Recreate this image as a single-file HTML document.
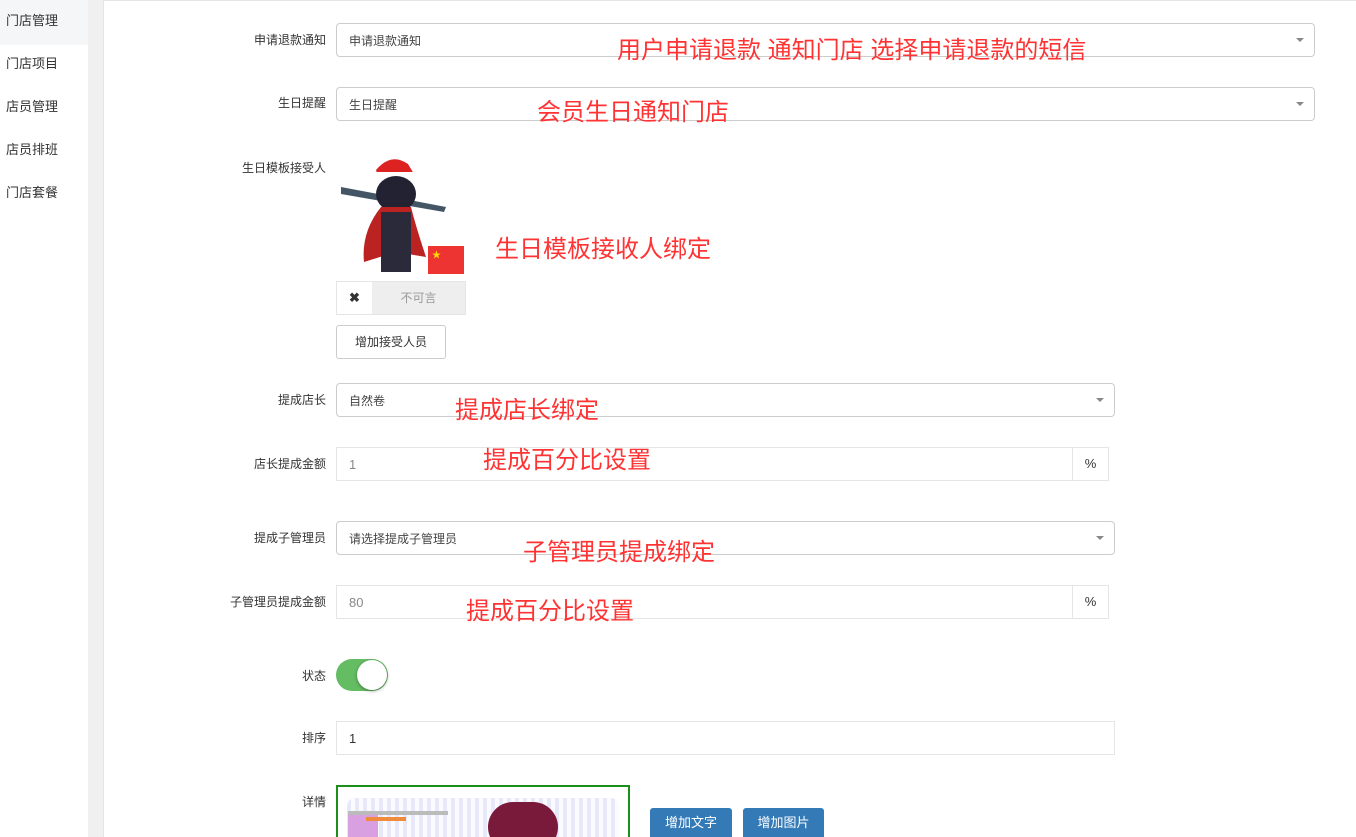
<!DOCTYPE html>
<html><head><meta charset="utf-8"><style>
html,body{margin:0;width:1356px;height:837px;overflow:hidden}
body{background:#fff;font-family:"Liberation Sans","Noto Sans CJK SC",sans-serif;font-size:12px;color:#333;position:relative}
.a{position:absolute}
.side{left:0;top:0;width:88px;height:837px;background:#fff}
.side div{position:absolute;left:6px;font-size:13px;color:#333}
.strip{left:88px;top:0;width:15px;height:837px;background:#f0f0f0}
.panel{left:103px;top:0;width:1253px;height:837px;border-left:1px solid #e5e5e5;border-top:1px solid #e5e5e5;background:#fff;box-sizing:border-box}
.lbl{text-align:right;width:140px;left:186px;font-size:12px;color:#333}
.sel{border:1px solid #ccc;border-radius:4px;height:34px;box-sizing:border-box;padding:8px 12px;font-size:12px;color:#444;background:#fff}
.sel:after{content:"";position:absolute;right:10px;top:14px;border:4px solid transparent;border-top:4px solid #888}
.inp{border:1px solid #e5e5e5;height:34px;box-sizing:border-box;padding:9px 12px;font-size:13px;color:#555}
.pct{border:1px solid #e5e5e5;border-left:none;width:36px;height:34px;box-sizing:border-box;text-align:center;line-height:32px;font-size:13px}
.red{color:#f33;font-size:24px;line-height:28px}
.btn{background:#337ab7;color:#fff;border-radius:3px;font-size:13px;text-align:center;line-height:30px;height:32px}
</style></head><body>
<div class="a side">
<div style="left:0;top:0;width:88px;height:45px;background:#f5f6f8"></div>
<div style="top:10px">门店管理</div><div style="top:53px">门店项目</div><div style="top:96px">店员管理</div><div style="top:139px">店员排班</div><div style="top:182px">门店套餐</div>
</div>
<div class="a strip"></div>
<div class="a panel"></div>

<div class="a lbl" style="top:31px">申请退款通知</div>
<div class="a sel" style="left:336px;top:23px;width:979px">申请退款通知</div>
<div class="a red" style="left:617px;top:37px">用户申请退款 通知门店 选择申请退款的短信</div>

<div class="a lbl" style="top:94px">生日提醒</div>
<div class="a sel" style="left:336px;top:87px;width:979px">生日提醒</div>
<div class="a red" style="left:537px;top:99px">会员生日通知门店</div>

<div class="a lbl" style="top:159px">生日模板接受人</div>
<svg class="a" style="left:336px;top:152px" width="130" height="130">
<path d="M40 18 Q55 0 72 12 L78 22 L42 24Z" fill="#d22"/><rect x="40" y="20" width="40" height="6" fill="#fff"/>
<path d="M5 35 L110 55 L108 60 L5 42Z" fill="#456"/>
<ellipse cx="60" cy="42" rx="20" ry="18" fill="#223"/>
<path d="M45 55 Q25 80 28 110 L60 100 L90 105 Q80 75 75 55Z" fill="#b22"/>
<rect x="45" y="60" width="30" height="60" fill="#2a2a3a"/>
<rect x="92" y="94" width="36" height="28" fill="#e33"/><text x="96" y="106" font-size="9" fill="#fd0">★</text>
</svg>
<div class="a" style="left:336px;top:281px;width:130px;height:34px;border:1px solid #e5e5e5;box-sizing:border-box;background:#fff">
<div class="a" style="left:0;top:0;width:35px;height:32px;text-align:center;line-height:32px;font-weight:bold;font-size:13px">✖</div>
<div class="a" style="left:35px;top:0;width:93px;height:32px;background:#eee;color:#999;text-align:center;line-height:32px;font-size:12px">不可言</div>
</div>
<div class="a" style="left:336px;top:325px;width:110px;height:34px;border:1px solid #ccc;border-radius:3px;box-sizing:border-box;text-align:center;line-height:32px;font-size:12px">增加接受人员</div>
<div class="a red" style="left:495px;top:236px">生日模板接收人绑定</div>

<div class="a lbl" style="top:391px">提成店长</div>
<div class="a sel" style="left:336px;top:383px;width:779px">自然卷</div>
<div class="a red" style="left:455px;top:397px">提成店长绑定</div>

<div class="a lbl" style="top:455px">店长提成金额</div>
<div class="a inp" style="left:336px;top:447px;width:737px;color:#888">1</div>
<div class="a pct" style="left:1073px;top:447px">%</div>
<div class="a red" style="left:483px;top:447px">提成百分比设置</div>

<div class="a lbl" style="top:529px">提成子管理员</div>
<div class="a sel" style="left:336px;top:521px;width:779px">请选择提成子管理员</div>
<div class="a red" style="left:523px;top:539px">子管理员提成绑定</div>

<div class="a lbl" style="top:593px">子管理员提成金额</div>
<div class="a inp" style="left:336px;top:585px;width:737px;color:#888">80</div>
<div class="a pct" style="left:1073px;top:585px">%</div>
<div class="a red" style="left:466px;top:598px">提成百分比设置</div>

<div class="a lbl" style="top:667px">状态</div>
<div class="a" style="left:336px;top:659px;width:52px;height:32px;border-radius:16px;background:#64bd63"></div>
<div class="a" style="left:357px;top:660px;width:30px;height:30px;border-radius:15px;background:#fff;box-shadow:0 1px 3px rgba(0,0,0,.4)"></div>

<div class="a lbl" style="top:729px">排序</div>
<div class="a inp" style="left:336px;top:721px;width:779px;color:#333">1</div>

<div class="a lbl" style="top:793px">详情</div>
<div class="a" style="left:336px;top:785px;width:294px;height:60px;border:2px solid #1a8f1a;box-sizing:border-box;background:#fff;overflow:hidden">
<div class="a" style="left:9px;top:11px;width:272px;height:50px;border-radius:8px;background:repeating-linear-gradient(90deg,#e8e8fb 0 4px,#fafaff 4px 8px)"></div>
<div class="a" style="left:10px;top:24px;width:100px;height:4px;background:#bbb"></div>
<div class="a" style="left:10px;top:28px;width:30px;height:30px;background:#d8a0e0"></div>
<div class="a" style="left:28px;top:30px;width:40px;height:4px;background:#f08a3c"></div>
<div class="a" style="left:150px;top:15px;width:70px;height:50px;border-radius:35px;background:#7a1a3a"></div>
</div>
<div class="a btn" style="left:650px;top:808px;width:82px">增加文字</div>
<div class="a btn" style="left:743px;top:808px;width:81px">增加图片</div>
</body></html>
